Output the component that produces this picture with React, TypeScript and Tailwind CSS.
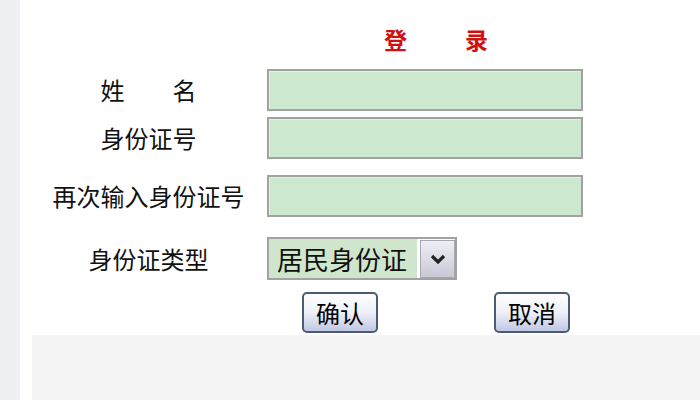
const font = { fontFamily: '"Noto Sans CJK SC", "Noto Sans", sans-serif' };

function Field({ label, mt }: { label: string; mt: string }) {
  return (
    <div className={`flex items-center h-[42px] ${mt}`}>
      <div className="w-[247px] pl-[10px] text-center text-[24px] leading-none text-[#111]">{label}</div>
      <div className="w-[316px] h-[42px] border-2 border-[#a2a2a2] bg-[#cce8cf] shadow-[inset_1px_1px_0_#e4f2e4]" />
    </div>
  );
}

function Btn({ children }: { children: string }) {
  return (
    <button className="w-[76px] h-[41px] rounded-[5px] border-2 border-[#4d5b72] bg-gradient-to-b from-white via-[#eef0f8] to-[#bfc8e4] text-[24px] leading-none text-black flex items-center justify-center">
      {children}
    </button>
  );
}

export default function App() {
  return (
    <div className="flex w-[700px] h-[400px] bg-white" style={font}>
      <div className="w-[20px] bg-[#eef0f3]" />
      <div className="flex-1 flex flex-col">
        {/* title */}
        <div className="h-[69px] pt-[27px] pl-[364px] flex gap-[58px] text-[23px] leading-[24px] font-bold text-[#d10f0f]">
          <span>登</span>
          <span>录</span>
        </div>

        <Field label="姓　　名" mt="mt-0" />
        <Field label="身份证号" mt="mt-[6px]" />
        <Field label="再次输入身份证号" mt="mt-[16px]" />

        {/* id type */}
        <div className="flex items-center h-[43px] mt-[20px]">
          <div className="w-[247px] pl-[10px] text-center text-[24px] leading-none text-[#111]">身份证类型</div>
          <div className="w-[190px] h-[43px] border-2 border-[#a2a2a2] bg-white flex items-center">
            <div className="flex-1 h-full bg-[#cfe6cc] flex items-center pl-[8px] text-[26px] leading-none text-[#111]">
              居民身份证
            </div>
            <div className="w-[35px] h-[38px] ml-[3px] border border-[#a8a8b4] bg-gradient-to-b from-[#eeeef4] to-[#c9c9d6] flex items-center justify-center">
              <svg width="16" height="12" viewBox="0 0 16 12">
                <polyline points="2,3 8,9 14,3" fill="none" stroke="#222" strokeWidth="3.2" />
              </svg>
            </div>
          </div>
        </div>

        {/* buttons */}
        <div className="flex h-[41px] mt-[12px] pl-[282px] gap-[116px]">
          <Btn>确认</Btn>
          <Btn>取消</Btn>
        </div>

        <div className="flex-1 mt-[2px] ml-[12px] bg-[#f4f4f4]" />
      </div>
    </div>
  );
}
